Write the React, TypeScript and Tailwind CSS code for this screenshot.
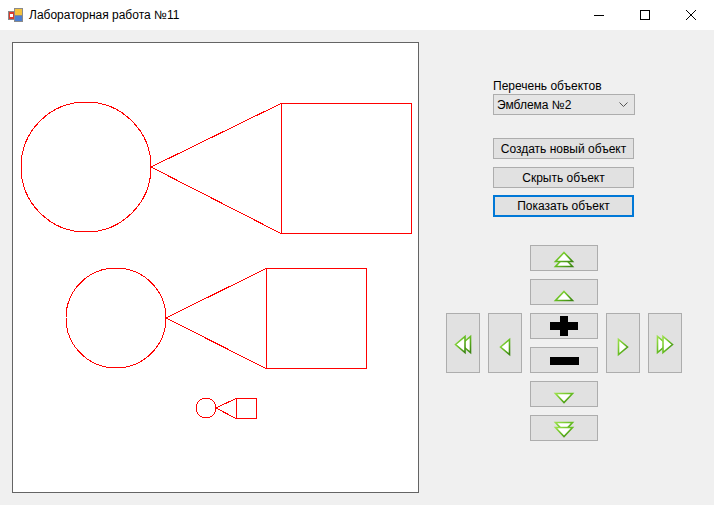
import type { ReactNode } from 'react';

const font = { fontFamily: '"Liberation Sans", Arial, sans-serif' };

// green outlined triangles, drawn in the button's content box coordinates
const G = ({ pts }: { pts: string[] }) => (
  <>
    {pts.map((p, i) => (
      <polygon key={i} points={p} fill="#ffffff" stroke="url(#grn)" strokeWidth={1.6} strokeLinejoin="miter" />
    ))}
  </>
);

const Defs = () => (
  <defs>
    <linearGradient id="grn" x1="0" y1="0" x2="1" y2="1">
      <stop offset="0" stopColor="#9be04a" />
      <stop offset="0.5" stopColor="#66bd22" />
      <stop offset="1" stopColor="#3b8412" />
    </linearGradient>
  </defs>
);

const ArrowBtn = ({ className, w, h, children }: { className: string; w: number; h: number; children: ReactNode }) => (
  <button className={`bg-[#e1e1e1] border border-[#adadad] p-0 flex ${className}`}>
    <svg width={w} height={h} viewBox={`0 0 ${w} ${h}`}>
      {children}
    </svg>
  </button>
);

const App = () => {
  return (
    <div className="w-[714px] h-[505px] bg-[#f0f0f0] flex flex-col overflow-hidden text-[12px] text-black" style={font}>
      {/* Title bar */}
      <div className="h-[30px] bg-white flex items-center shrink-0">
        <svg width="16" height="16" viewBox="0 0 16 16" className="ml-2">
          <rect x="0.5" y="4.5" width="6" height="8" fill="#d83a2c" stroke="#8a8a8a" />
          <rect x="6.5" y="1.5" width="8" height="7" fill="#f4c23c" stroke="#8a8a8a" />
          <rect x="6.5" y="8.5" width="8" height="6" fill="#4d7fd1" stroke="#8a8a8a" />
          <rect x="2" y="7" width="3" height="3" fill="#ffffff" />
        </svg>
        <span className="ml-[5px]">Лабораторная работа №11</span>
        <div className="ml-auto flex h-full">
          <div className="w-[46px] flex items-center justify-center">
            <svg width="10" height="10" viewBox="0 0 10 10">
              <line x1="0" y1="5.5" x2="10" y2="5.5" stroke="#000" strokeWidth="1" />
            </svg>
          </div>
          <div className="w-[46px] flex items-center justify-center">
            <svg width="10" height="10" viewBox="0 0 10 10">
              <rect x="0.5" y="0.5" width="9" height="9" fill="none" stroke="#000" strokeWidth="1" />
            </svg>
          </div>
          <div className="w-[46px] flex items-center justify-center">
            <svg width="10" height="10" viewBox="0 0 10 10">
              <path d="M0 0L10 10M10 0L0 10" stroke="#000" strokeWidth="1" />
            </svg>
          </div>
        </div>
      </div>

      {/* Body */}
      <div className="flex flex-1">
        {/* Drawing canvas */}
        <div className="ml-3 mt-3 w-[407px] h-[451px] bg-white border border-[#646464]">
          <svg width="405" height="449" viewBox="0 0 405 449" shapeRendering="crispEdges">
            <g fill="none" stroke="#ff0000" strokeWidth="1">
              <circle cx="73" cy="124" r="65" />
              <rect x="268.5" y="60.5" width="130" height="130" />
              <line x1="138" y1="124" x2="268" y2="60.5" />
              <line x1="138" y1="124" x2="268" y2="190.5" />

              <circle cx="103" cy="275" r="50" />
              <rect x="253.5" y="225.5" width="100" height="100" />
              <line x1="153" y1="275" x2="253" y2="225.5" />
              <line x1="153" y1="275" x2="253" y2="325.5" />

              <circle cx="193" cy="365" r="10" />
              <rect x="223.5" y="355.5" width="20" height="20" />
              <line x1="203" y1="365" x2="223" y2="355.5" />
              <line x1="203" y1="365" x2="223" y2="375.5" />
            </g>
          </svg>
        </div>

        {/* Controls */}
        <div className="ml-[27px] pt-[48px] flex flex-col">
          <div className="ml-[47px] w-[142px] flex flex-col">
            <div className="h-4 leading-4">Перечень объектов</div>
            <div className="h-[21px] bg-[#e5e5e5] border border-[#adadad] flex items-center pl-[3px] pr-[6px]">
              <span>Эмблема №2</span>
              <svg width="9" height="5" viewBox="0 0 9 5" className="ml-auto">
                <path d="M0.5 0.5L4.5 4.5L8.5 0.5" fill="none" stroke="#555" strokeWidth="1" />
              </svg>
            </div>
            <button className="mt-[23px] w-[141px] h-[21px] bg-[#e1e1e1] border border-[#adadad] text-[12px] leading-none">
              Создать новый объект
            </button>
            <button className="mt-2 w-[141px] h-[21px] bg-[#e1e1e1] border border-[#adadad] text-[12px] leading-none">
              Скрыть объект
            </button>
            <button className="mt-[7px] w-[141px] h-[22px] bg-[#e1e1e1] border-2 border-[#0078d7] text-[12px] leading-none">
              Показать объект
            </button>
          </div>

          {/* Arrow pad */}
          <div className="mt-[28px] grid grid-cols-[34px_34px_68px_34px_34px] grid-rows-[repeat(6,26px)] gap-2">
            <svg width="0" height="0" className="absolute">
              <Defs />
            </svg>
            <ArrowBtn className="col-start-3 row-start-1" w={66} h={24}>
              <G pts={['33,11.5 41.5,20.5 24.5,20.5', '33,6.5 41.5,15.5 24.5,15.5']} />
            </ArrowBtn>
            <ArrowBtn className="col-start-3 row-start-2" w={66} h={24}>
              <G pts={['33,11.5 41.5,20.5 24.5,20.5']} />
            </ArrowBtn>
            <ArrowBtn className="col-start-1 row-start-3 row-span-2" w={32} h={58}>
              <G pts={['14,30.5 23.5,22.5 23.5,38.5', '8.5,30.5 18,22.5 18,38.5']} />
            </ArrowBtn>
            <ArrowBtn className="col-start-2 row-start-3 row-span-2" w={32} h={58}>
              <G pts={['11.5,33 20.5,25.5 20.5,40.5']} />
            </ArrowBtn>
            <ArrowBtn className="col-start-3 row-start-3" w={66} h={24}>
              <rect x="19" y="8" width="28" height="8" fill="#000" />
              <rect x="29" y="2" width="8" height="20" fill="#000" />
            </ArrowBtn>
            <ArrowBtn className="col-start-4 row-start-3 row-span-2" w={32} h={58}>
              <G pts={['20.5,33 11.5,25.5 11.5,40.5']} />
            </ArrowBtn>
            <ArrowBtn className="col-start-5 row-start-3 row-span-2" w={32} h={58}>
              <G pts={['18,30.5 8.5,22.5 8.5,38.5', '23.5,30.5 14,22.5 14,38.5']} />
            </ArrowBtn>
            <ArrowBtn className="col-start-3 row-start-4" w={66} h={24}>
              <rect x="19" y="9" width="29" height="8" fill="#000" />
            </ArrowBtn>
            <ArrowBtn className="col-start-3 row-start-5" w={66} h={24}>
              <G pts={['24.5,11.5 41.5,11.5 33,20.5']} />
            </ArrowBtn>
            <ArrowBtn className="col-start-3 row-start-6" w={66} h={24}>
              <G pts={['24.5,6.5 41.5,6.5 33,15.5', '24.5,11.5 41.5,11.5 33,20.5']} />
            </ArrowBtn>
          </div>
        </div>
      </div>
    </div>
  );
};

export default App;
